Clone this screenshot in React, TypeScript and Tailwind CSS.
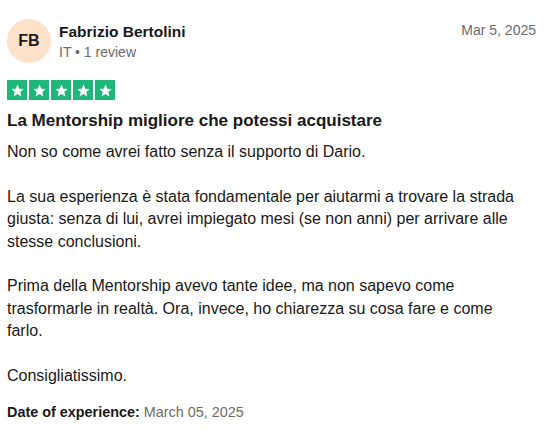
import React from 'react';

const reviewText = `Non so come avrei fatto senza il supporto di Dario.

La sua esperienza è stata fondamentale per aiutarmi a trovare la strada
giusta: senza di lui, avrei impiegato mesi (se non anni) per arrivare alle
stesse conclusioni.

Prima della Mentorship avevo tante idee, ma non sapevo come
trasformarle in realtà. Ora, invece, ho chiarezza su cosa fare e come
farlo.

Consigliatissimo.`;

function Star() {
    return (
        <div className="w-5 h-5 bg-[#1fb67a] flex items-center justify-center">
            <svg viewBox="0 0 24 24" className="w-[15px] h-[15px]" fill="white">
                <path d="M12 2.5l2.8 6.6 7.2.6-5.5 4.7 1.7 7-6.2-3.8-6.2 3.8 1.7-7L2 9.7l7.2-.6z" />
            </svg>
        </div>
    );
}

export default function App() {
    return (
        <div className="w-[549px] h-[430px] bg-white pl-[7px] pr-[13px] pt-[19px] text-[#191919] font-['Liberation_Sans',Arial,sans-serif] overflow-hidden">
            {/* header */}
            <div className="flex items-start">
                <div className="w-11 h-11 rounded-full bg-[#fde1c9] flex items-center justify-center shrink-0">
                    <span className="text-[16px] font-bold text-[#1c1c1c]">FB</span>
                </div>
                <div className="ml-2 flex-1 mt-[3px]">
                    <p className="text-[15.5px] leading-5 font-bold">Fabrizio Bertolini</p>
                    <p className="text-[14px] leading-5 text-[#6b6b6b]">IT • 1 review</p>
                </div>
                <p className="text-[14px] leading-5 text-[#6b6b6b] mt-[1px]">Mar 5, 2025</p>
            </div>

            {/* stars */}
            <div className="flex gap-[2px] mt-[17px]">
                {[0, 1, 2, 3, 4].map(i => <Star key={i} />)}
            </div>

            <h2 className="mt-[10px] text-[17px] leading-[22px] font-bold">
                La Mentorship migliore che potessi acquistare
            </h2>

            <p className="mt-[9px] text-[16px] leading-[22.4px] whitespace-pre-line">
                {reviewText}
            </p>

            <p className="mt-[15px] text-[14.4px] leading-5">
                <span className="font-bold">Date of experience:</span>{' '}
                <span className="text-[#6b6b6b]">March 05, 2025</span>
            </p>
        </div>
    );
}
